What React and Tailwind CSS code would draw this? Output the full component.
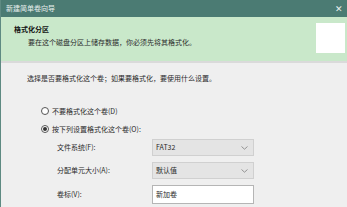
import React from 'react';

const font = { fontFamily: '"Noto Sans CJK SC", "Liberation Sans", sans-serif' };

const Select = ({ value }) => (
  <div className="flex h-[17px] w-[102px] items-center justify-between border border-[#d0d0d0] bg-[#e4e4e4] pl-[3px] pr-[5px]">
    <span>{value}</span>
    <svg width="7" height="4" viewBox="0 0 7 4" fill="none">
      <path d="M0.5 0.5 L3.5 3.2 L6.5 0.5" stroke="#8a8a8a" strokeWidth="0.9" />
    </svg>
  </div>
);

const Radio = ({ checked, label }) => (
  <div className="flex items-center gap-[3px]">
    <span className="flex h-[8px] w-[8px] items-center justify-center rounded-full border border-[#555] bg-white">
      {checked && <span className="h-[4px] w-[4px] rounded-full bg-[#333]" />}
    </span>
    <span>{label}</span>
  </div>
);

export default function App() {
  return (
    <div
      className="flex h-[207px] w-[347px] flex-col overflow-hidden border-l border-[#5e8a82] bg-[#efefef] text-[7px] leading-none text-[#2a2a2a]"
      style={font}
    >
      {/* title bar */}
      <div className="flex h-[17px] shrink-0 items-center justify-between bg-[#4b7b73] pl-[5px] pr-[4px] text-[#e8f0ee]">
        <span>新建简单卷向导</span>
        <span className="text-[9px] text-[#e8f0ee]">✕</span>
      </div>

      {/* header */}
      <div className="flex h-[46px] shrink-0 justify-between border-b-[2px] border-[#dadada] bg-[#c9e8ca] pl-[13px] pr-[2px] pt-[9px]">
        <div className="flex flex-col gap-[6px]">
          <span className="font-bold text-[#111]">格式化分区</span>
          <span className="pl-[14px]">要在这个磁盘分区上储存数据，你必须先将其格式化。</span>
        </div>
        <div className="mt-[-3px] h-[30px] w-[29px] bg-white" />
      </div>

      {/* body */}
      <div className="flex flex-col pl-[26px] pt-[12px]">
        <span>选择是否要格式化这个卷；如果要格式化，要使用什么设置。</span>
        <div className="mt-[25px] flex flex-col gap-[10px] pl-[14px]">
          <Radio label="不要格式化这个卷(D)" />
          <Radio checked label="按下列设置格式化这个卷(O):" />
        </div>
        <div className="mt-[6px] grid grid-cols-[95px_auto] items-center gap-y-[6px] pl-[30px]">
          <span>文件系统(F):</span>
          <Select value="FAT32" />
          <span>分配单元大小(A):</span>
          <Select value="默认值" />
          <span>卷标(V):</span>
          <div className="flex h-[19px] w-[102px] items-center border border-[#b5b5b5] bg-white pl-[3px]">
            新加卷
          </div>
        </div>
      </div>
    </div>
  );
}
